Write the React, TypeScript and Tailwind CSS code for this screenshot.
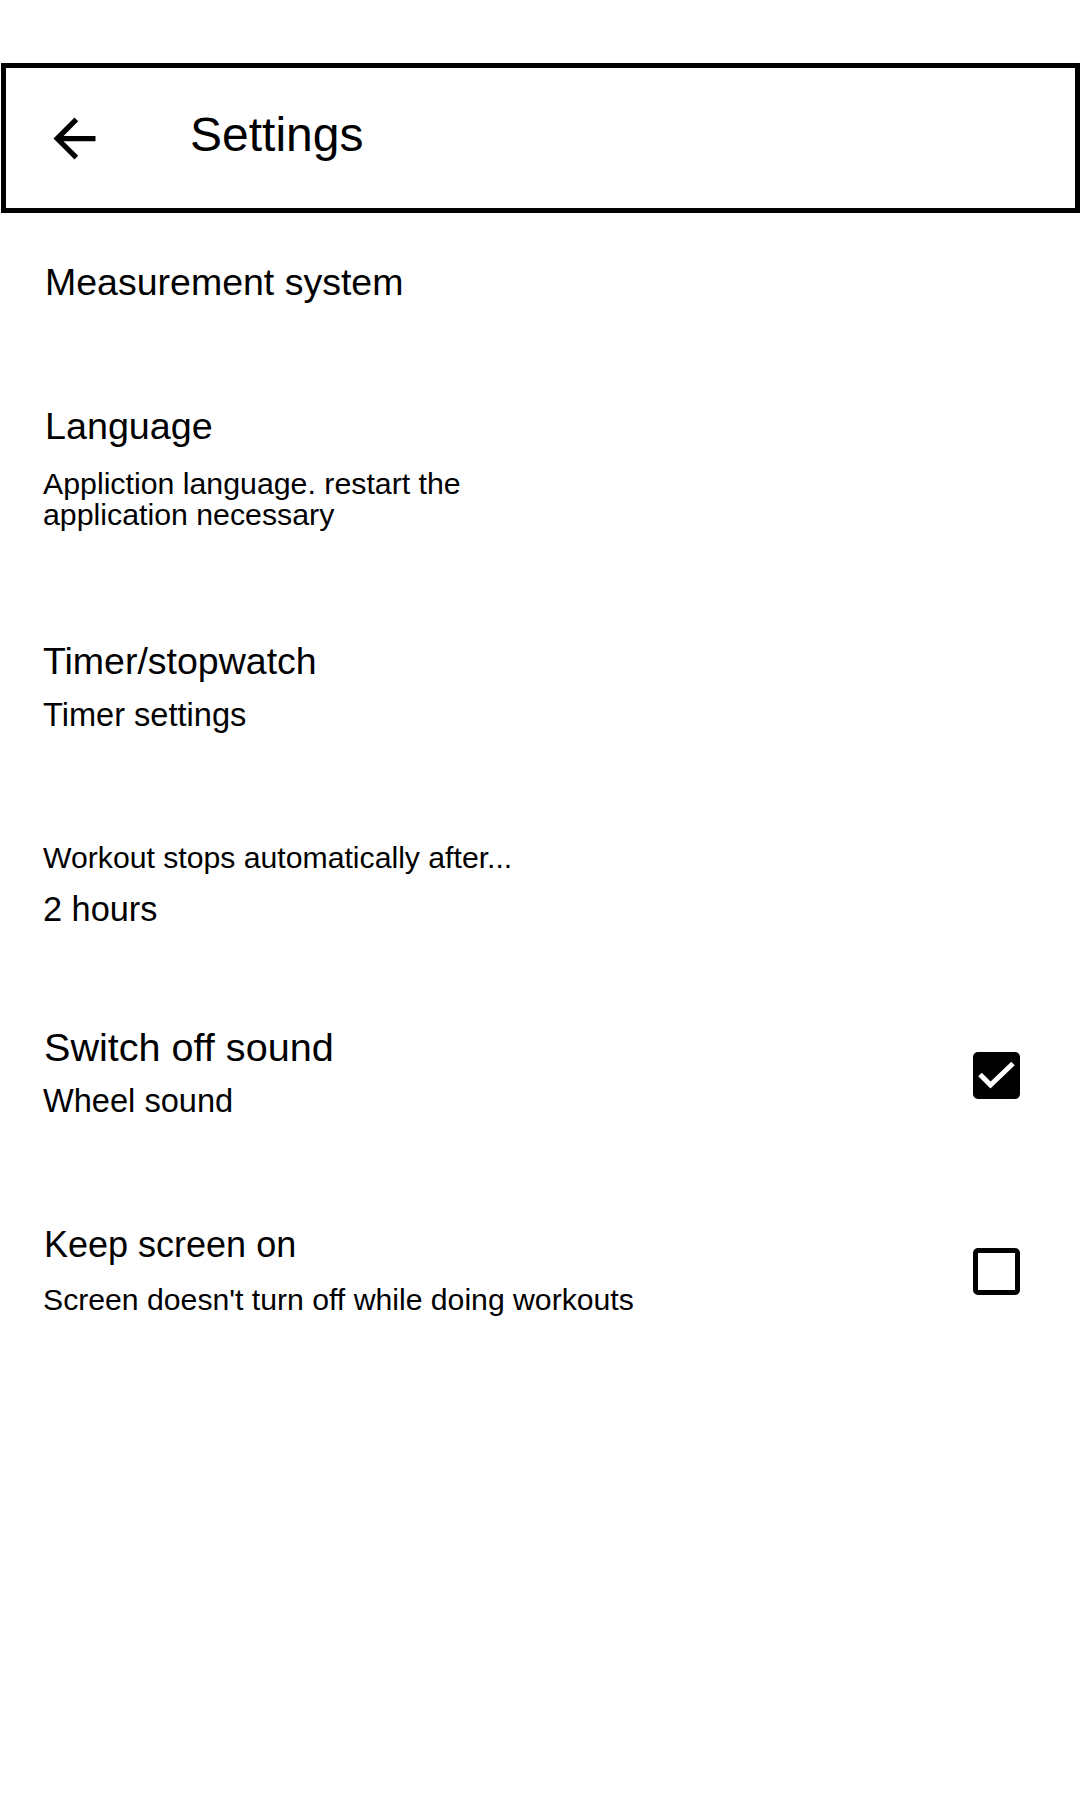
import React from "react";

type CheckProps = { checked: boolean; className?: string };

function Checkbox({ checked, className = "" }: CheckProps) {
    if (checked) {
        return (
            <div className={`flex h-[47px] w-[47px] shrink-0 items-center justify-center rounded-[5px] bg-black ${className}`}>
                <svg width="47" height="47" viewBox="0 0 47 47" fill="none">
                    <polyline points="7,22.5 17.5,33 40,11.5" stroke="#fff" strokeWidth="5" strokeLinecap="butt" strokeLinejoin="miter" />
                </svg>
            </div>
        );
    }
    return <div className={`h-[47px] w-[47px] shrink-0 rounded-[5px] border-[5px] border-black ${className}`} />;
}

export default function App() {
    return (
        <div className="min-h-[1800px] w-full bg-white pt-[63px] font-['Liberation_Sans',Arial,sans-serif] text-black">
            {/* Top bar */}
            <header className="ml-px flex h-[150px] items-center border-[5px] border-black pl-[37px]">
                <svg width="63" height="63" viewBox="0 0 24 24" className="shrink-0">
                    <path d="M20 11H7.83l5.59-5.59L12 4l-8 8 8 8 1.41-1.41L7.83 13H20v-2z" fill="#000" />
                </svg>
                <h1 className="mb-[7px] ml-[84px] text-[48px] leading-none">Settings</h1>
            </header>

            <div className="flex flex-col pl-[43px] pr-[60px]">
                {/* Measurement system */}
                <div className="mt-[51px] pl-[2px] text-[37.5px] leading-none">Measurement system</div>

                {/* Language */}
                <div className="mt-[106px] pl-[2px] text-[37.7px] leading-none">Language</div>
                <div className="mt-[23px] w-[475px] text-[30.3px] leading-[31px]">
                    Appliction language. restart the application necessary
                </div>

                {/* Timer */}
                <div className="mt-[113px] text-[37.5px] leading-none">Timer/stopwatch</div>
                <div className="mt-[18px] text-[32.6px] leading-none">Timer settings</div>

                {/* Auto stop */}
                <div className="mt-[112px] text-[30.2px] leading-none">Workout stops automatically after...</div>
                <div className="mt-[18px] text-[34.3px] leading-none">2 hours</div>

                {/* Sound */}
                <div className="mt-[102px] flex items-center justify-between">
                    <div className="flex flex-col">
                        <div className="pl-[1px] text-[39.6px] leading-none">Switch off sound</div>
                        <div className="mt-[18px] text-[32.6px] leading-none">Wheel sound</div>
                    </div>
                    <Checkbox checked className="mt-[5px]" />
                </div>

                {/* Screen */}
                <div className="mt-[109px] flex items-center justify-between">
                    <div className="flex flex-col">
                        <div className="pl-[1px] text-[36px] leading-none">Keep screen on</div>
                        <div className="mt-[22px] text-[30.2px] leading-none">Screen doesn't turn off while doing workouts</div>
                    </div>
                    <Checkbox checked={false} />
                </div>
            </div>
        </div>
    );
}
